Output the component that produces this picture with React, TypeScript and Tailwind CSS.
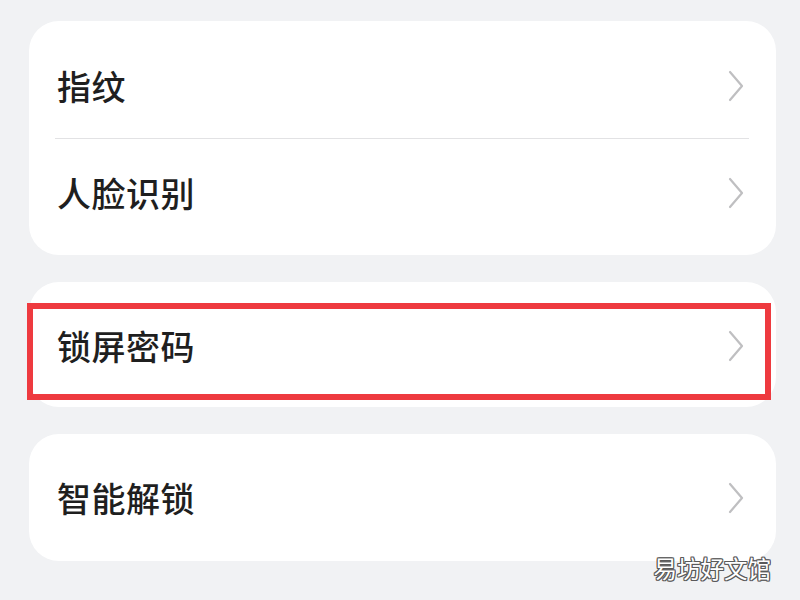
import React from "react";

const Chevron = () => (
  <svg width="18" height="34" viewBox="0 0 18 34" fill="none" className="shrink-0">
    <path d="M3 3 L15 17 L3 31" stroke="#bfbfc1" strokeWidth="2.2" strokeLinecap="round" strokeLinejoin="round" />
  </svg>
);

const Row = ({ label, h }: { label: string; h: string }) => (
  <div className={`flex items-center justify-between pl-[28px] pr-[31px] ${h}`}>
    <span className="text-[34px] font-medium text-[#1f1f1f] leading-none tracking-[0.5px]">{label}</span>
    <Chevron />
  </div>
);

export default function App() {
  return (
    <div
      className="relative w-[800px] h-[600px] bg-[#f1f2f4] overflow-hidden flex flex-col pt-[21px] pl-[29px] pr-[24px] gap-[27px]"
      style={{ fontFamily: '"Noto Sans CJK SC", "Noto Sans", sans-serif' }}
    >
      <div className="bg-white rounded-[30px] flex flex-col">
        <Row label="指纹" h="h-[117px] pt-[12px]" />
        <div className="ml-[26px] mr-[27px] h-px bg-[#e2e2e4]" />
        <Row label="人脸识别" h="h-[116px] pb-[8px]" />
      </div>
      <div className="relative bg-white rounded-[30px] h-[125px] flex flex-col pt-[21px]">
        <Row label="锁屏密码" h="h-[97px] pb-[12px]" />
        <div className="absolute left-[-2px] right-[5px] top-[21px] h-[97px] border-[6px] border-[#ee3a3f]" />
      </div>
      <div className="bg-white rounded-[30px] h-[127px] flex flex-col">
        <Row label="智能解锁" h="h-[127px]" />
      </div>
      <div className="absolute right-[29px] bottom-[20px] text-[23.5px] leading-none text-white tracking-[0px] [text-shadow:1px_0_#5a5a5a,-1px_0_#5a5a5a,0_1px_#5a5a5a,0_-1px_#5a5a5a,1px_1px_#5a5a5a,-1px_-1px_#5a5a5a,1px_-1px_#5a5a5a,-1px_1px_#5a5a5a]">
        易坊好文馆
      </div>
    </div>
  );
}
